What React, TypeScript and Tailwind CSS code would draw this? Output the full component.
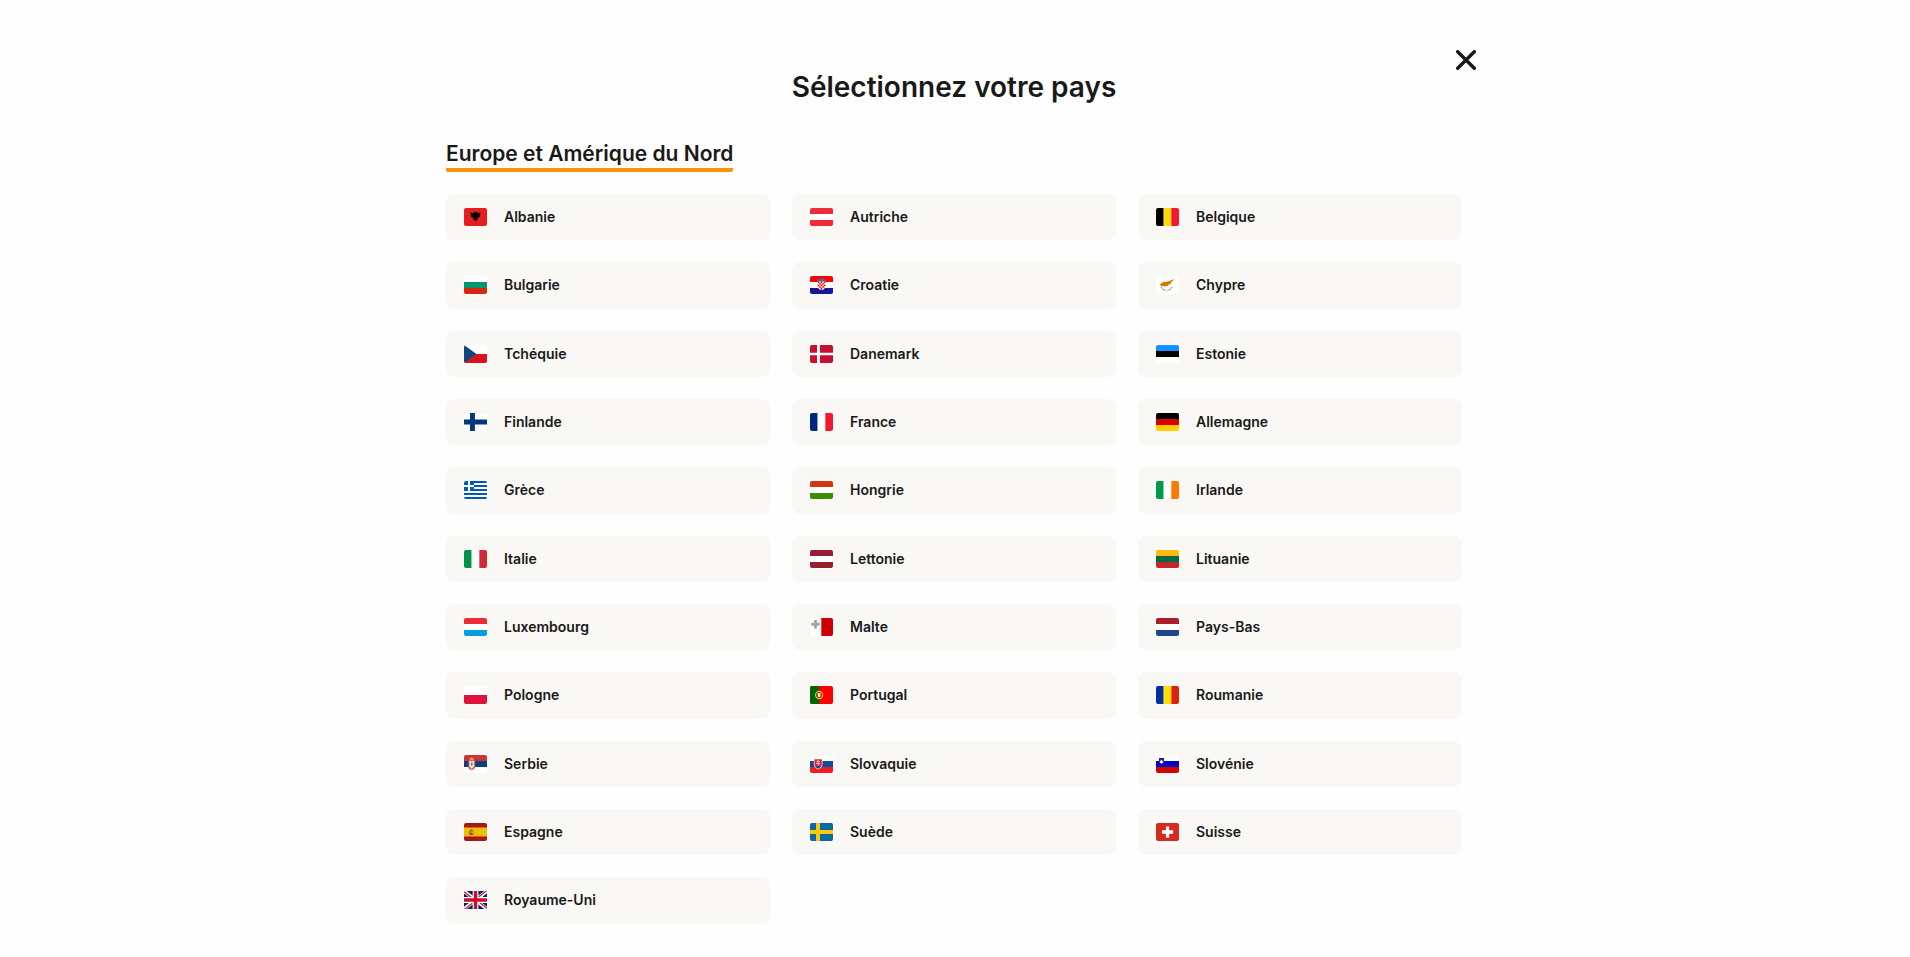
/**
 * Country picker: title, region heading and a 3-column list of countries.
 */

import type { ReactNode } from "react";

type Country = { code: string; name: string; flag: ReactNode };

// Flags are drawn on a 24x18 canvas.
function rows(...colors: string[]): ReactNode {
  const h = 18 / colors.length;
  return colors.map((c, i) => <rect key={i} y={i * h} width="24" height={h} fill={c} />);
}

function cols(...colors: string[]): ReactNode {
  const w = 24 / colors.length;
  return colors.map((c, i) => <rect key={i} x={i * w} width={w} height="18" fill={c} />);
}

const albania = (
  <>
    <rect width="24" height="18" fill="#e41e20" />
    <path
      d="M12 5 10.900 3.600l-1.300.5.9.9-.7.500-3-1.200.5 1.400-.8.2.9.9-.6.5 1 .7-.4.8 1.200.2.1.9 1.200-.4.400.5-1.300 1.600 1.500-.2.300.8.500-.2.700 2.300.700-2.300.500.2.300-.8 1.500.2-1.300-1.600.400-.5 1.200.4.100-.9 1.200-.2-.4-.8 1-.7-.6-.5.9-.9-.8-.2.500-1.400-3 1.200-.7-.5.900-.9-1.300-.5z"
      fill="#000"
    />
  </>
);

const croatia = (
  <>
    {rows("#ff0000", "#ffffff", "#171796")}
    <path d="M7.8 5.6 7.2 3l1.9.6.8-1 1 .7 1.1-.9 1.1.9 1-.7.8 1 1.9-.6-.6 2.6z" fill="#3d6fa8" />
    <path d="M8 5.4h8v4.8c0 2.2-1.6 3.7-4 3.9-2.4-.2-4-1.7-4-3.9z" fill="#fff" />
    <path
      d="M8 5.4h1.6V7H8zM11.2 5.4h1.6V7h-1.6zM14.4 5.4H16V7h-1.6zM9.6 7h1.6v1.6H9.6zM12.8 7h1.6v1.6h-1.6zM8 8.6h1.6v1.6H8zM11.2 8.6h1.6v1.6h-1.6zM14.4 8.6H16v1.6h-1.6zM9.6 10.2h1.6v1.6H9.6zM12.8 10.2h1.6v1.6h-1.6zM8.4 11.8h1.2v1.3zM11.2 11.8h1.6v2h-1.6zM14.4 11.8h1.2l-1.2 1.3z"
      fill="#f00"
    />
  </>
);

const cyprus = (
  <>
    <rect width="24" height="18" fill="#fff" />
    <path
      d="M4 8.200 6.300 7 8 5.700 10 5.900 13 5.300 16 4.300 19.200 3 18 4.600 16 5.800 15.600 7.600 13.400 8.700 11.800 10 9.400 10.500 7.500 10 6.500 10.300 4.900 9.500z"
      fill="#d57800"
    />
    <path d="M5.300 10.800c.6 2 2.600 3.200 5.200 3.500M16.800 10.800c-.6 2-2.600 3.200-5.200 3.500" fill="none" stroke="#6f7468" strokeWidth="1" strokeDasharray="1.600 .4" />
  </>
);

const czechia = (
  <>
    {rows("#ffffff", "#d7141a")}
    <path d="M0 0l13 9L0 18z" fill="#11457e" />
  </>
);

const denmark = (
  <>
    <rect width="24" height="18" fill="#c8102e" />
    <path d="M7.3 0h3.1v18H7.3zM0 7.7h24v2.6H0z" fill="#fff" />
  </>
);

const finland = (
  <>
    <rect width="24" height="18" fill="#fff" />
    <path d="M6.3 0h5.1v18H6.3zM0 6.500h24v5H0z" fill="#003580" />
  </>
);

const greece = (
  <>
    <rect width="24" height="18" fill="#fff" />
    <path d="M0 0h24v2H0zM0 4h24v2H0zM0 8h24v2H0zM0 12h24v2H0zM0 16h24v2H0zM0 0h10.400v10H0z" fill="#005bae" />
    <path d="M4.200 0h2.100v10H4.200zM0 4h10.400v2H0z" fill="#fff" />
  </>
);

const malta = (
  <>
    <rect width="24" height="18" fill="#fff" />
    <rect x="11.8" width="12.2" height="18" fill="#c00" />
    <path d="M4.200 2.200h3v2.500h3v3h-3v2.600h-3V7.700h-3v-3h3z" fill="#a7a6a4" />
    <path d="M4.200 2.200h3l-1.500 1zM4.200 10.300h3l-1.500-1z" fill="#b98a63" />
  </>
);

const portugal = (
  <>
    <rect width="24" height="18" fill="#f00" />
    <rect width="9.5" height="18" fill="#006600" />
    <circle cx="9.5" cy="9" r="3.700" fill="none" stroke="#d6cf1c" strokeWidth="1.2" />
    <path d="M7.400 6.500h4.200v3.300c0 1.200-.9 1.900-2.100 1.900s-2.100-.7-2.100-1.900z" fill="#e8333a" />
    <path d="M8.200 7.200h2.600v2.500c0 .8-.6 1.200-1.300 1.200s-1.300-.4-1.300-1.200z" fill="#fff" />
    <path d="M9.200 8h.6v1.200h-.6z" fill="#5a6db0" />
  </>
);

const serbia = (
  <>
    {rows("#c6363c", "#0c4076", "#ffffff")}
    <path d="M6.300 4.900 5.900 2.900l1.300.4.900-1.300.9 1.300 1.300-.4-.4 2z" fill="#d9a441" />
    <path d="M4.600 5.200h7v6.500c0 1.800-1.500 2.900-3.500 3.200-2-.3-3.500-1.400-3.500-3.200z" fill="#c9514b" />
    <path d="M5.300 6.300 7 5.400l1.100 1 1.100-1 1.700.9-.4 3.200.6 1.700-1.700 1.300-1.300 1.900-1.300-1.900-1.700-1.300.6-1.700z" fill="#e9e3e0" />
    <path d="M7.400 7.700h1.500v2.300l-.8.800-.7-.8z" fill="#c6363c" />
    <path d="M5.700 12.600 7 14l-1.200.5zM10.500 12.600 9.200 14l1.200.5z" fill="#b57b2b" />
  </>
);

const slovakia = (
  <>
    {rows("#ffffff", "#0b4ea2", "#ee1c25")}
    <path d="M4 3.600h9v5.600c0 2.500-1.800 4-4.500 5.200C5.800 13.200 4 11.700 4 9.200z" fill="#fff" />
    <path d="M4.700 4.300h7.600v5c0 2-1.500 3.300-3.800 4.400-2.300-1.100-3.800-2.400-3.800-4.400z" fill="#ee1c25" />
    <path d="M5.700 11.500c.6-.9 1.300-.8 1.500-.4.300-.8 2.300-.8 2.600 0 .2-.4.900-.5 1.500.4-.7.900-1.700 1.600-2.800 2.200-1.100-.6-2.100-1.300-2.800-2.200z" fill="#0b4ea2" />
    <path d="M8.100 4.900h.8V6h1.300v.8H8.900v1.100h1.900v.8H8.900v2h-.8v-2H6.200v-.8h1.900V6.800H6.800V6h1.300z" fill="#fff" />
  </>
);

const slovenia = (
  <>
    {rows("#ffffff", "#0000c0", "#d50000")}
    <path d="M3.100 3h5.200v3c0 1.600-1.100 2.500-2.600 3-1.500-.5-2.600-1.400-2.600-3z" fill="#1a1ab5" />
    <path d="M3.600 7 4.900 5.800l.8-1.100.8 1.100L7.800 7c-.4.8-1.200 1.300-2.100 1.600C4.800 8.300 4 7.800 3.600 7z" fill="#fff" />
  </>
);

const spain = (
  <>
    <rect width="24" height="18" fill="#aa151b" />
    <rect y="4.500" width="24" height="9" fill="#f1bf00" />
    <path d="M5.700 7.200 7.700 6l2 1.200v3.900c0 .8-.8 1.300-2 1.300s-2-.5-2-1.300z" fill="#b5651d" />
    <path d="M4.300 8.700h.9v3.200h-.9zM10.300 8.700h.9v3.200h-.9z" fill="#c89a5a" />
    <path d="M7.900 8.200h1.300v1.700H7.900z" fill="#d8b7ac" />
    <path d="M6.300 9.900h1.400v1.500H6.300z" fill="#8c2f1b" />
  </>
);

const sweden = (
  <>
    <rect width="24" height="18" fill="#066aa7" />
    <path d="M6.300 0h4.100v18H6.300zM0 7h24v4H0z" fill="#fecc00" />
  </>
);

const switzerland = (
  <>
    <rect width="24" height="18" fill="#d52b1e" />
    <path d="M10.300 3.400h3.500v3.900h4.100v3.500h-4.100v3.900h-3.500v-3.900H6.200V7.300h4.100z" fill="#fff" />
  </>
);

const unitedKingdom = (
  <g transform="scale(.0375)">
    <path fill="#012169" d="M0 0h640v480H0z" />
    <path fill="#fff" d="m75 0 244 181L562 0h78v62L400 241l240 178v61h-80L320 301 81 480H0v-60l239-178L0 64V0z" />
    <path fill="#c8102e" d="m424 281 216 159v40L369 281zm-184 20 6 35L54 480H0zM640 0v3L391 191l2-44L590 0zM0 0l239 176h-60L0 42z" />
    <path fill="#fff" d="M241 0v480h160V0zM0 160v160h640V160z" />
    <path fill="#c8102e" d="M0 193v96h640v-96zM273 0v480h96V0z" />
  </g>
);

const COUNTRIES: Country[] = [
  { code: "al", name: "Albanie", flag: albania },
  { code: "at", name: "Autriche", flag: rows("#ef2b37", "#ffffff", "#ef2b37") },
  { code: "be", name: "Belgique", flag: cols("#000001", "#ffd90c", "#f31830") },
  { code: "bg", name: "Bulgarie", flag: rows("#ffffff", "#00966e", "#d62612") },
  { code: "hr", name: "Croatie", flag: croatia },
  { code: "cy", name: "Chypre", flag: cyprus },
  { code: "cz", name: "Tchéquie", flag: czechia },
  { code: "dk", name: "Danemark", flag: denmark },
  { code: "ee", name: "Estonie", flag: rows("#1791ff", "#000001", "#ffffff") },
  { code: "fi", name: "Finlande", flag: finland },
  { code: "fr", name: "France", flag: cols("#00267f", "#ffffff", "#f31830") },
  { code: "de", name: "Allemagne", flag: rows("#000001", "#dd0000", "#ffce00") },
  { code: "gr", name: "Grèce", flag: greece },
  { code: "hu", name: "Hongrie", flag: rows("#d43516", "#ffffff", "#388d00") },
  { code: "ie", name: "Irlande", flag: cols("#009a49", "#ffffff", "#ff7900") },
  { code: "it", name: "Italie", flag: cols("#009246", "#ffffff", "#ce2b37") },
  { code: "lv", name: "Lettonie", flag: rows("#981e32", "#ffffff", "#981e32") },
  { code: "lt", name: "Lituanie", flag: rows("#fdb913", "#006a44", "#c1272d") },
  { code: "lu", name: "Luxembourg", flag: rows("#ef2b37", "#ffffff", "#00a1de") },
  { code: "mt", name: "Malte", flag: malta },
  { code: "nl", name: "Pays-Bas", flag: rows("#ae1c28", "#ffffff", "#21468b") },
  { code: "pl", name: "Pologne", flag: rows("#ffffff", "#dc143c") },
  { code: "pt", name: "Portugal", flag: portugal },
  { code: "ro", name: "Roumanie", flag: cols("#00319c", "#ffde00", "#de2110") },
  { code: "rs", name: "Serbie", flag: serbia },
  { code: "sk", name: "Slovaquie", flag: slovakia },
  { code: "si", name: "Slovénie", flag: slovenia },
  { code: "es", name: "Espagne", flag: spain },
  { code: "se", name: "Suède", flag: sweden },
  { code: "ch", name: "Suisse", flag: switzerland },
  { code: "gb", name: "Royaume-Uni", flag: unitedKingdom },
];

function CountryLink({ code, name, flag }: Country) {
  return (
    <a
      href={`#${code}`}
      className="flex items-center gap-[17px] rounded-lg bg-[#f9f8f5] px-[18px] py-3.5 text-sm leading-[1.31] font-semibold"
    >
      <svg
        viewBox="0 0 24 18"
        preserveAspectRatio="none"
        className="h-[18px] w-[23px] shrink-0 rounded-xs"
        aria-hidden="true"
      >
        {flag}
      </svg>
      <span>{name}</span>
    </a>
  );
}

export default function App() {
  return (
    <main className="min-h-screen bg-[#fefefe] font-['Inter',sans-serif] text-[#1a1919]">
      <div className="mx-auto w-full max-w-[1042px] pt-[50px] pb-8">
        <div className="flex justify-end">
          <button type="button" aria-label="Fermer" className="cursor-pointer">
            <svg viewBox="0 0 20 20" className="size-5" fill="none" stroke="currentColor" strokeWidth="3.4" strokeLinecap="round">
              <path d="M1.700 1.700l16.600 16.600M18.300 1.700L1.700 18.300" />
            </svg>
          </button>
        </div>

        <div className="pr-3.5 pl-3">
          <h1 className="text-center text-[28px] leading-[34px] font-semibold">Sélectionnez votre pays</h1>

          <section className="mt-9" aria-labelledby="region">
            <h2 id="region" className="inline-block rounded-xs border-b-4 border-[#ff9109] text-[21px] leading-7 font-semibold">
              Europe et Amérique du Nord
            </h2>
            <ul className="mt-[22px] grid grid-cols-3 gap-[22px]">
              {COUNTRIES.map((country) => (
                <li key={country.code}>
                  <CountryLink {...country} />
                </li>
              ))}
            </ul>
          </section>
        </div>
      </div>
    </main>
  );
}
